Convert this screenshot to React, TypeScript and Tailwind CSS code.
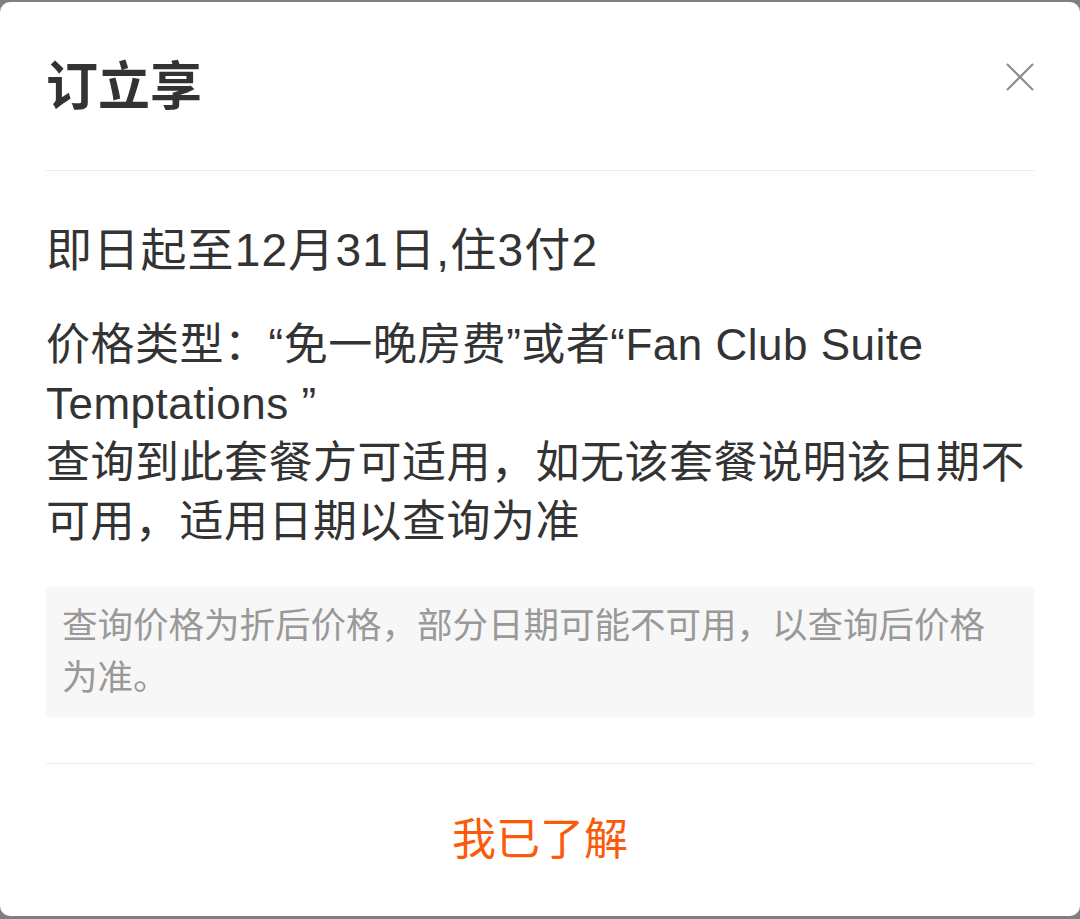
export default function App() {
  return (
    <div className="h-screen w-full bg-[#7f7f7f] pt-[2px] pb-[3px] font-['Liberation_Sans','Noto_Sans_CJK_SC',sans-serif]">
      <div className="flex h-full flex-col rounded-[10px] bg-white">
        {/* header */}
        <div className="mx-[46px] flex items-start justify-between border-b border-[#ececec] pt-[55px] pb-[53px]">
          <h1 className="text-[52px] font-bold leading-[60px] text-[#333]">订立享</h1>
          <button className="mt-[6px] -mr-[2px] text-[#8a8a8a]">
            <svg width="30" height="28" viewBox="0 0 30 28" fill="none" stroke="currentColor" strokeWidth="2">
              <line x1="1" y1="1" x2="27" y2="27" />
              <line x1="27" y1="1" x2="1" y2="27" />
            </svg>
          </button>
        </div>

        {/* body */}
        <div className="mx-[46px] border-b border-[#ececec] pt-[49px] pb-[46px] text-[#333]">
          <p className="text-[46px] leading-[60px] tracking-[1.2px]">即日起至12月31日,住3付2</p>
          <p className="mt-[35px] text-[44px] leading-[59px] tracking-[0.5px]">
            价格类型：“免一晚房费”或者“Fan Club Suite Temptations ”
            <br />
            查询到此套餐方可适用，如无该套餐说明该日期不可用，适用日期以查询为准
          </p>
          <div className="mt-[36px] bg-[#f7f7f7] px-[16px] py-[13px] text-[35.5px] leading-[52px] text-[#999]">
            查询价格为折后价格，部分日期可能不可用，以查询后价格为准。
          </div>
        </div>

        {/* footer */}
        <div className="flex flex-1 items-center justify-center">
          <button className="text-[44px] leading-[60px] text-[#fa5a0a]">我已了解</button>
        </div>
      </div>
    </div>
  );
}
